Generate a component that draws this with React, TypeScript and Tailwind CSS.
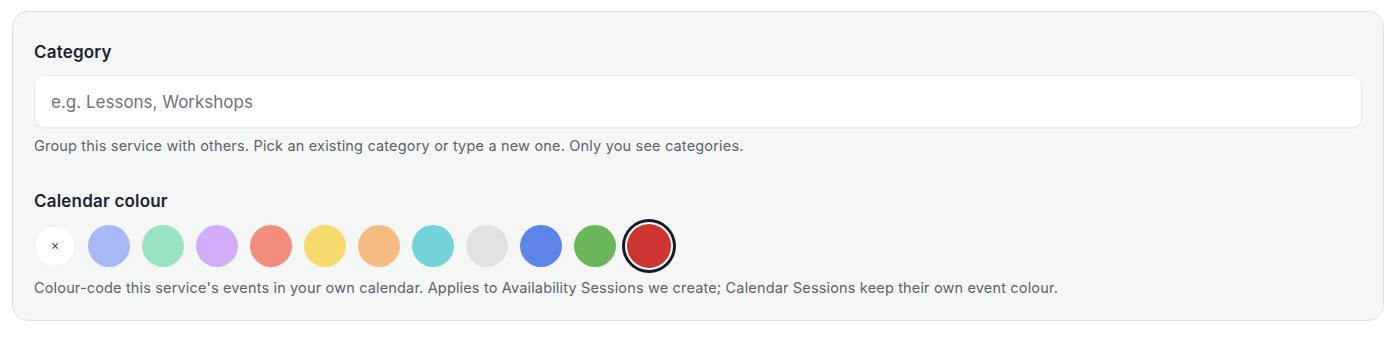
const colours = [
  "#a7b8f6",
  "#98e4c3",
  "#d3aef8",
  "#f28c7d",
  "#f6da6e",
  "#f6bb80",
  "#73d3d9",
  "#e1e1e1",
  "#5d84e7",
  "#6bb55a",
  "#cc3531",
];

const selected = "#cc3531";

const App = () => {
  return (
    <div className="min-h-screen bg-white pt-[11px] pl-[12px] font-['Inter',sans-serif]">
      <section className="w-[1372px] rounded-2xl border border-[#dde1e2] bg-[#f5f7f7] px-[21px] pt-[28px] pb-[22px]">
        <label className="block text-[17px] leading-6 font-semibold tracking-[0.2px] text-[#1d2330]">
          Category
        </label>
        <input
          placeholder="e.g. Lessons, Workshops"
          className="mt-[11px] block h-[53px] w-full rounded-[10px] border border-[#e8ebec] bg-white px-4 text-[17px] text-[#1d2330] shadow-[0_1px_2px_rgba(0,0,0,0.04)] outline-none placeholder:text-[#6e737b]"
        />
        <p className="mt-[8px] text-[14.5px] leading-5 tracking-[0.18px] text-[#5d626b]">
          Group this service with others. Pick an existing category or type a new one. Only you see categories.
        </p>

        <h3 className="mt-[33px] text-[17px] leading-6 font-semibold tracking-[0.2px] text-[#1d2330]">
          Calendar colour
        </h3>
        <div className="mt-[11px] flex items-center gap-3">
          <button className="flex h-[42px] w-[42px] items-center justify-center rounded-full border border-[#eceeef] bg-white text-[13px] text-[#444a54]">
            ×
          </button>
          {colours.map((c) =>
            c === selected ? (
              <button
                key={c}
                className="h-[44px] w-[44px] -mx-px rounded-full ring-[3px] ring-[#151b2b] ring-offset-2 ring-offset-white"
                style={{ backgroundColor: c }}
              />
            ) : (
              <button
                key={c}
                className="h-[42px] w-[42px] rounded-full"
                style={{ backgroundColor: c }}
              />
            )
          )}
        </div>
        <p className="mt-[10px] text-[14.5px] leading-5 tracking-[0.16px] text-[#5d626b]">
          Colour-code this service's events in your own calendar. Applies to Availability Sessions we create; Calendar Sessions keep their own event colour.
        </p>
      </section>
    </div>
  );
};

export default App;
